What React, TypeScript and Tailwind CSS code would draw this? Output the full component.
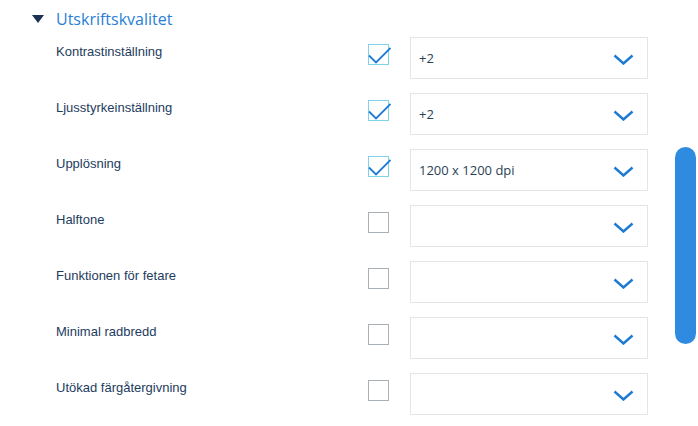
import React from "react";

const rows = [
  { label: "Kontrastinställning", checked: true, value: "+2" },
  { label: "Ljusstyrkeinställning", checked: true, value: "+2" },
  { label: "Upplösning", checked: true, value: "1200 x 1200 dpi" },
  { label: "Halftone", checked: false, value: "" },
  { label: "Funktionen för fetare", checked: false, value: "" },
  { label: "Minimal radbredd", checked: false, value: "" },
  { label: "Utökad färgåtergivning", checked: false, value: "" },
];

function Checkbox({ checked }: { checked: boolean }) {
  return (
    <div
      className={`relative w-[21px] h-[21px] border ${
        checked ? "border-[#7fd3e8]" : "border-[#a9b0b5]"
      } bg-white`}
    >
      {checked && (
        <svg
          className="absolute left-[-1px] top-[-1px]"
          width="23"
          height="23"
          viewBox="0 0 23 23"
          fill="none"
        >
          <path d="M1 11.5 L8 18.5 L22.5 4" stroke="#1f7bd6" strokeWidth="1.8" />
        </svg>
      )}
    </div>
  );
}

function Chevron() {
  return (
    <svg width="21" height="11" viewBox="0 0 21 11" fill="none">
      <path d="M1.5 1.5 L10.5 9.5 L19.5 1.5" stroke="#1b7ad4" strokeWidth="2.4" />
    </svg>
  );
}

export default function App() {
  return (
    <div className="w-[698px] h-[426px] bg-white relative overflow-hidden font-['Liberation_Sans',Arial,sans-serif]">
      <div className="flex items-center h-[37px] pl-[32px]">
        <svg width="12" height="8" viewBox="0 0 12 8" className="mt-[1px]">
          <path d="M0 0 L12 0 L6 8 Z" fill="#1a3352" />
        </svg>
        <span className="ml-[12px] text-[16px] text-[#2a80d5] font-['Open_Sans',sans-serif]">
          Utskriftskvalitet
        </span>
      </div>
      <div className="flex flex-col gap-[14px] pl-[56px]">
        {rows.map((r) => (
          <div key={r.label} className="flex h-[42px]">
            <div className="w-[312px] pt-[5px] text-[13px] text-[#1d3c5e]">{r.label}</div>
            <div className="w-[42px] pt-[7px]">
              <Checkbox checked={r.checked} />
            </div>
            <div className="w-[238px] h-[42px] border border-[#e3e6e8] flex items-center justify-between pl-[8px] pr-[13px]">
              <span className="text-[13px] text-[#2a3f55] font-['Open_Sans',sans-serif] pt-[2px]">
                {r.value}
              </span>
              <div className="pt-[2px]">
                <Chevron />
              </div>
            </div>
          </div>
        ))}
      </div>
      <div className="absolute left-[675px] top-[147px] w-[21px] h-[197px] rounded-full bg-[#2e8be0]" />
    </div>
  );
}
